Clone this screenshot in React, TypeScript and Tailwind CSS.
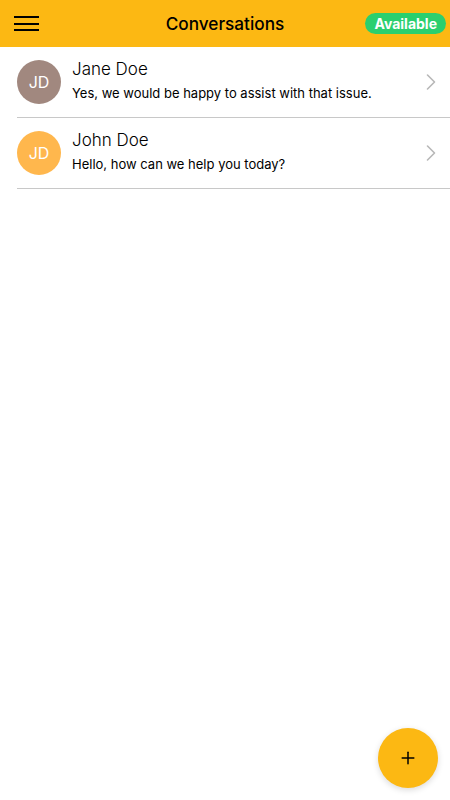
import React from 'react'
import { ChevronRight, Plus } from 'lucide-react'

interface Conversation {
  id: string
  name: string
  initials: string
  message: string
  color: string
}

const conversations: Conversation[] = [
  { id: 'jane', name: 'Jane Doe', initials: 'JD', message: 'Yes, we would be happy to assist with that issue.', color: 'bg-[#a1887f]' },
  { id: 'john', name: 'John Doe', initials: 'JD', message: 'Hello, how can we help you today?', color: 'bg-[#ffb74d]' }
]

const App: React.FC = () => {
  return (
    <div className="relative h-[800px] w-[450px] overflow-hidden bg-white font-['Inter',sans-serif] text-black">
      {/* Header */}
      <header className="flex h-[47px] items-center justify-between bg-[#fcb813] pl-[14px] pr-[4px]">
        <button className="flex w-[25px] flex-col gap-[4.5px]">
          <span className="block h-[2px] w-[25px] bg-black" />
          <span className="block h-[2px] w-[25px] bg-black" />
          <span className="block h-[2px] w-[25px] bg-black" />
        </button>
        <h1 className="absolute left-1/2 -translate-x-1/2 text-[17.2px] font-medium leading-none">Conversations</h1>
        <span className="rounded-full bg-[#2bcf6e] px-[9px] py-[2px] text-[14px] font-bold leading-[17px] text-white">
          Available
        </span>
      </header>

      {/* List */}
      <ul className="pl-[17px]">
        {conversations.map((c) => (
          <li key={c.id} className="flex h-[71px] items-center border-b border-[#c8c8c8]">
            <div className={`flex h-[44px] w-[44px] shrink-0 items-center justify-center rounded-full ${c.color}`}>
              <span className="text-[16px] text-white">{c.initials}</span>
            </div>
            <div className="mb-[6px] ml-[11px] flex min-w-0 flex-1 flex-col">
              <span className="text-[17px] font-light leading-[22px]">{c.name}</span>
              <span className="mt-[5px] text-[13px] leading-[16px]">{c.message}</span>
            </div>
            <ChevronRight className="mr-[5px] h-[28px] w-[28px] text-[#b8b8b8]" strokeWidth={1.4} />
          </li>
        ))}
      </ul>

      {/* FAB */}
      <button className="absolute bottom-[12px] right-[12px] flex h-[60px] w-[60px] items-center justify-center rounded-full bg-[#fcb813] shadow-[0_2px_6px_rgba(0,0,0,0.15)]">
        <Plus className="h-[20px] w-[20px] text-black" strokeWidth={1.8} />
      </button>
    </div>
  )
}

export default App
